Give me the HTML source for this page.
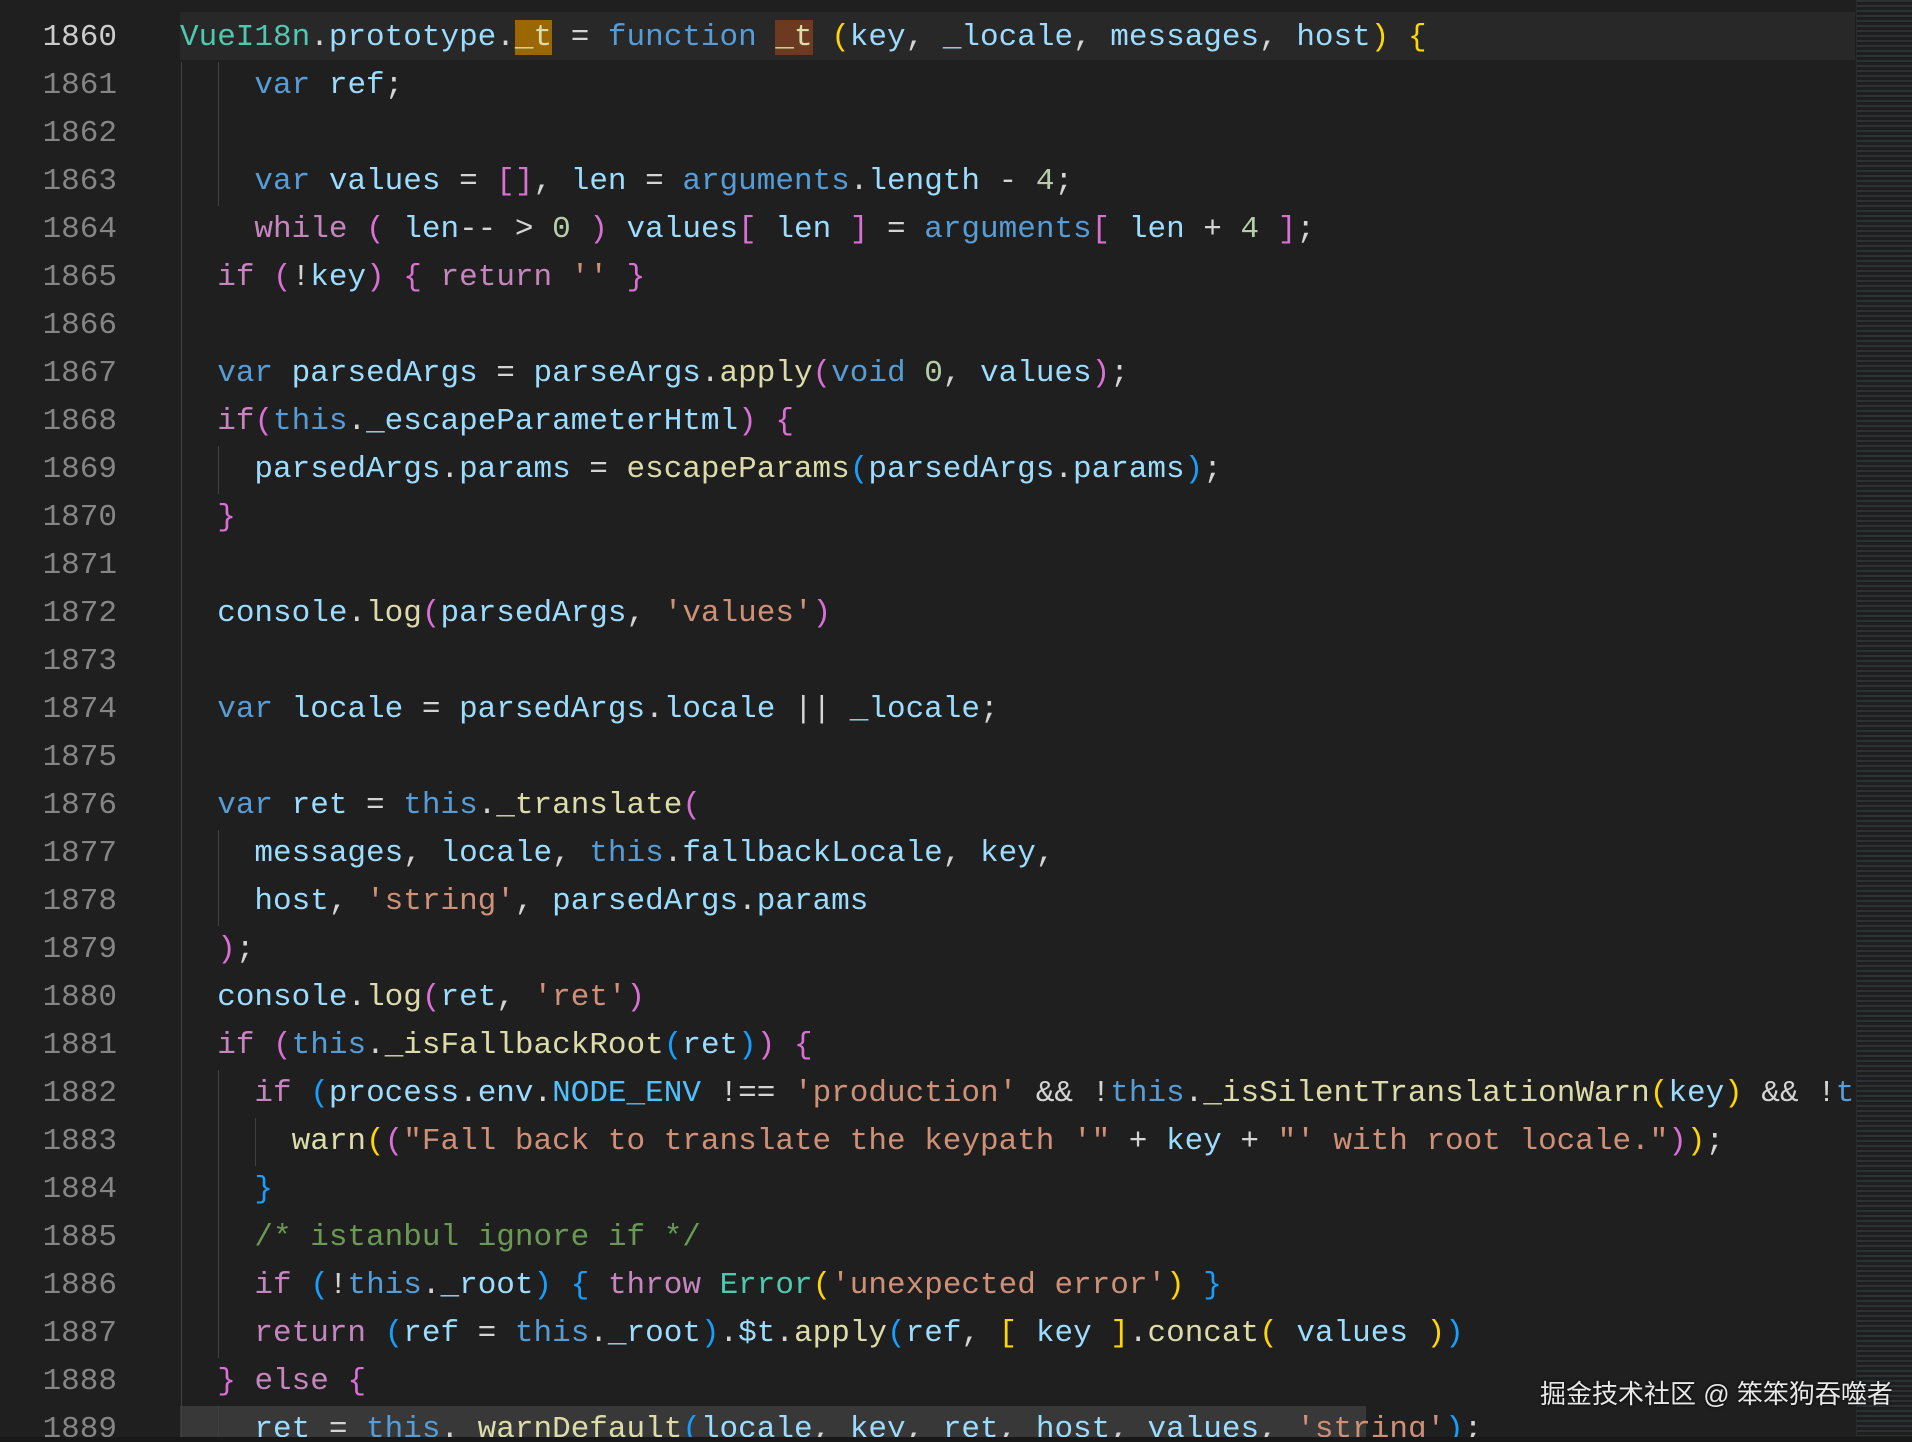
<!DOCTYPE html>
<html><head><meta charset="utf-8"><style>
html,body{margin:0;padding:0;background:#1f1f1f;width:1912px;height:1442px;overflow:hidden;position:relative}
.mono{font-family:"Liberation Mono",monospace;font-size:31px;line-height:48px;white-space:pre}
#nums{position:absolute;left:0;top:14px;width:117px;text-align:right;color:#858585}
#nums div{height:48px}
#code{position:absolute;left:180px;top:14px;color:#d4d4d4}
#code div{height:48px}
.cur{position:absolute;left:180px;top:12px;width:1675px;height:48px;background:#282828}
.sel{position:absolute;left:180px;top:1406px;width:1186px;height:36px;background:#383838}
.g1{position:absolute;width:1px;background:#404040}
.v{color:#569cd6}.k{color:#c586c0}.i{color:#9cdcfe}.f{color:#dcdcaa}.s{color:#ce9178}.n{color:#b5cea8}.c{color:#4ec9b0}.m{color:#6a9955}.e{color:#4fc1ff}
.g{color:#ffd700}.p{color:#da70d6}.b{color:#179fff}
.h1{background:#9a6700}.h2{background:#6b3a20}
#mini{position:absolute;left:1856px;top:0;width:56px;height:1436px;background:#1e1e1e;border-left:1px solid #2a2a2a;
background-image:repeating-linear-gradient(180deg,rgba(120,150,170,.16) 0 2px,transparent 2px 5px);}
#bar{position:absolute;left:0;top:1437px;width:1912px;height:5px;background:#181818}
.wm{position:absolute;left:1540px;top:1374px;font-family:"Liberation Sans","Noto Sans CJK SC",sans-serif;font-size:26px;color:#e8e8e8;text-shadow:0 0 3px #000}
</style></head><body>
<div class="cur"></div>
<div class="sel"></div>
<div class="g1" style="left:181px;top:62px;height:1380px"></div>
<div class="g1" style="left:218px;top:62px;height:144px"></div>
<div class="g1" style="left:218px;top:446px;height:48px"></div>
<div class="g1" style="left:218px;top:830px;height:96px"></div>
<div class="g1" style="left:218px;top:1070px;height:288px"></div>
<div class="g1" style="left:255px;top:1118px;height:48px"></div>
<div class="g1" style="left:218px;top:1406px;height:36px"></div>
<div id="nums" class="mono"><div style="color:#cccccc">1860</div><div>1861</div><div>1862</div><div>1863</div><div>1864</div><div>1865</div><div>1866</div><div>1867</div><div>1868</div><div>1869</div><div>1870</div><div>1871</div><div>1872</div><div>1873</div><div>1874</div><div>1875</div><div>1876</div><div>1877</div><div>1878</div><div>1879</div><div>1880</div><div>1881</div><div>1882</div><div>1883</div><div>1884</div><div>1885</div><div>1886</div><div>1887</div><div>1888</div><div>1889</div></div>
<div id="code" class="mono"><div><span class="c">VueI18n</span>.<span class="i">prototype</span>.<span class="f h1">_t</span> = <span class="v">function</span> <span class="f h2">_t</span> <span class="g">(</span><span class="i">key</span>, <span class="i">_locale</span>, <span class="i">messages</span>, <span class="i">host</span><span class="g">)</span> <span class="g">{</span></div><div>    <span class="v">var</span> <span class="i">ref</span>;</div><div> </div><div>    <span class="v">var</span> <span class="i">values</span> = <span class="p">[]</span>, <span class="i">len</span> = <span class="v">arguments</span>.<span class="i">length</span> - <span class="n">4</span>;</div><div>    <span class="k">while</span> <span class="p">(</span> <span class="i">len</span>-- &gt; <span class="n">0</span> <span class="p">)</span> <span class="i">values</span><span class="p">[</span> <span class="i">len</span> <span class="p">]</span> = <span class="v">arguments</span><span class="p">[</span> <span class="i">len</span> + <span class="n">4</span> <span class="p">]</span>;</div><div>  <span class="k">if</span> <span class="p">(</span>!<span class="i">key</span><span class="p">)</span> <span class="p">{</span> <span class="k">return</span> <span class="s">''</span> <span class="p">}</span></div><div> </div><div>  <span class="v">var</span> <span class="i">parsedArgs</span> = <span class="i">parseArgs</span>.<span class="f">apply</span><span class="p">(</span><span class="v">void</span> <span class="n">0</span>, <span class="i">values</span><span class="p">)</span>;</div><div>  <span class="k">if</span><span class="p">(</span><span class="v">this</span>.<span class="i">_escapeParameterHtml</span><span class="p">)</span> <span class="p">{</span></div><div>    <span class="i">parsedArgs</span>.<span class="i">params</span> = <span class="f">escapeParams</span><span class="b">(</span><span class="i">parsedArgs</span>.<span class="i">params</span><span class="b">)</span>;</div><div>  <span class="p">}</span></div><div> </div><div>  <span class="i">console</span>.<span class="f">log</span><span class="p">(</span><span class="i">parsedArgs</span>, <span class="s">'values'</span><span class="p">)</span></div><div> </div><div>  <span class="v">var</span> <span class="i">locale</span> = <span class="i">parsedArgs</span>.<span class="i">locale</span> || <span class="i">_locale</span>;</div><div> </div><div>  <span class="v">var</span> <span class="i">ret</span> = <span class="v">this</span>.<span class="f">_translate</span><span class="p">(</span></div><div>    <span class="i">messages</span>, <span class="i">locale</span>, <span class="v">this</span>.<span class="i">fallbackLocale</span>, <span class="i">key</span>,</div><div>    <span class="i">host</span>, <span class="s">'string'</span>, <span class="i">parsedArgs</span>.<span class="i">params</span></div><div>  <span class="p">)</span>;</div><div>  <span class="i">console</span>.<span class="f">log</span><span class="p">(</span><span class="i">ret</span>, <span class="s">'ret'</span><span class="p">)</span></div><div>  <span class="k">if</span> <span class="p">(</span><span class="v">this</span>.<span class="f">_isFallbackRoot</span><span class="b">(</span><span class="i">ret</span><span class="b">)</span><span class="p">)</span> <span class="p">{</span></div><div>    <span class="k">if</span> <span class="b">(</span><span class="i">process</span>.<span class="i">env</span>.<span class="e">NODE_ENV</span> !== <span class="s">'production'</span> &amp;&amp; !<span class="v">this</span>.<span class="f">_isSilentTranslationWarn</span><span class="g">(</span><span class="i">key</span><span class="g">)</span> &amp;&amp; !<span class="v">t</span></div><div>      <span class="f">warn</span><span class="g">(</span><span class="p">(</span><span class="s">"Fall back to translate the keypath '"</span> + <span class="i">key</span> + <span class="s">"' with root locale."</span><span class="p">)</span><span class="g">)</span>;</div><div>    <span class="b">}</span></div><div>    <span class="m">/* istanbul ignore if */</span></div><div>    <span class="k">if</span> <span class="b">(</span>!<span class="v">this</span>.<span class="i">_root</span><span class="b">)</span> <span class="b">{</span> <span class="k">throw</span> <span class="c">Error</span><span class="g">(</span><span class="s">'unexpected error'</span><span class="g">)</span> <span class="b">}</span></div><div>    <span class="k">return</span> <span class="b">(</span><span class="i">ref</span> = <span class="v">this</span>.<span class="i">_root</span><span class="b">)</span>.<span class="i">$t</span>.<span class="f">apply</span><span class="b">(</span><span class="i">ref</span>, <span class="g">[</span> <span class="i">key</span> <span class="g">]</span>.<span class="f">concat</span><span class="g">(</span> <span class="i">values</span> <span class="g">)</span><span class="b">)</span></div><div>  <span class="p">}</span> <span class="k">else</span> <span class="p">{</span></div><div>    <span class="i">ret</span> = <span class="v">this</span>.<span class="f">_warnDefault</span><span class="b">(</span><span class="i">locale</span>, <span class="i">key</span>, <span class="i">ret</span>, <span class="i">host</span>, <span class="i">values</span>, <span class="s">'string'</span><span class="b">)</span>;</div></div>
<div id="mini"></div>
<div id="bar"></div>
<div class="wm">掘金技术社区 @ 笨笨狗吞噬者</div>
</body></html>
